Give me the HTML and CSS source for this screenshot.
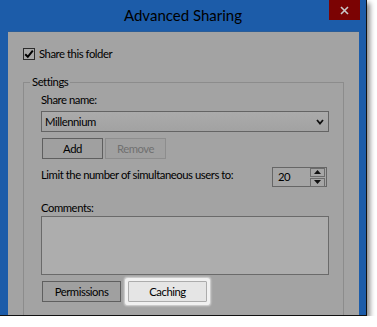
FILE: index.html
```html
<!DOCTYPE html>
<html lang="en">
<head>
    <meta charset="UTF-8">
    <title>Advanced Sharing</title>
    <link rel="stylesheet" href="styles.css">
</head>
<body>
    <div class="window">
        <header class="titlebar">
            <span class="title">Advanced Sharing</span>
            <span class="close">
                <svg width="9" height="9" viewBox="0 0 9 9"><path d="M1 1 L8 8 M8 1 L1 8" stroke="#c9c9c9" stroke-width="1.6"/></svg>
            </span>
        </header>

        <div class="client">
            <label class="share-check">
                <span class="checkbox">
                    <svg width="10" height="10" viewBox="0 0 10 10"><path d="M1.2 5.2 L3.8 7.8 L8.8 1.6" fill="none" stroke="#000" stroke-width="2"/></svg>
                </span>
                Share this folder
            </label>

            <fieldset class="group">
                <legend>Settings</legend>

                <div class="field-label">Share name:</div>
                <div class="combo">
                    <span>Millennium</span>
                    <svg width="8" height="6" viewBox="0 0 8 6"><path d="M1 1 L4 4.5 L7 1" fill="none" stroke="#111" stroke-width="1.8"/></svg>
                </div>

                <div class="btn-row">
                    <button class="btn btn-default">Add</button>
                    <button class="btn btn-disabled">Remove</button>
                </div>

                <div class="limit-row">
                    <span>Limit the number of simultaneous users to:</span>
                    <div class="spin">
                        <span class="spin-value">20</span>
                        <div class="spin-btns">
                            <span class="spin-btn"><svg width="7" height="4" viewBox="0 0 7 4"><path d="M0 4 L3.5 0 L7 4 Z" fill="#111"/></svg></span>
                            <span class="spin-btn"><svg width="7" height="4" viewBox="0 0 7 4"><path d="M0 0 L3.5 4 L7 0 Z" fill="#111"/></svg></span>
                        </div>
                    </div>
                </div>

                <div class="field-label comments-label">Comments:</div>
                <div class="textarea"></div>

                <div class="btn-row bottom-row">
                    <button class="btn btn-default btn-wide">Permissions</button>
                    <button class="btn btn-wide btn-focus">Caching</button>
                </div>
            </fieldset>
        </div>
    </div>
</body>
</html>
```

FILE: styles.css
```css
body, html {
    margin: 0;
    padding: 0;
    background: #fff;
    font-family: Lato, "Open Sans", sans-serif;
    font-size: 11.3px;
    letter-spacing: -0.45px;
    color: #000;
}

.window {
    width: 366px;
    height: 315px;
    background: #1c5ca9;
    border-right: 1px solid #111;
    border-bottom: 1px solid #111;
    box-shadow: 3px 3px 5px rgba(0, 0, 0, 0.45);
    display: flex;
    flex-direction: column;
    overflow: hidden;
}

/* Title bar */
.titlebar {
    height: 31px;
    flex: none;
    display: grid;
    grid-template-columns: 1fr auto 1fr;
    align-items: start;
}

.title {
    grid-column: 2;
    font-size: 15px;
    line-height: 16px;
    letter-spacing: 0;
    margin-top: 7px;
    color: #000;
}

.close {
    grid-column: 3;
    justify-self: end;
    margin-right: 6px;
    width: 31px;
    height: 20px;
    background: #7b0303;
    display: flex;
    align-items: center;
    justify-content: center;
}

.close svg {
    display: block;
}

/* Client area */
.client {
    flex: 1;
    margin: 0 7px 0 8px;
    background: #a3a3a3;
    border-top: 1px solid #2b5d97;
    padding: 15px 0 0 15px;
    overflow: hidden;
}

.share-check {
    display: flex;
    align-items: center;
    gap: 4px;
    line-height: 14px;
}

.checkbox {
    width: 10px;
    height: 10px;
    border: 1px solid #2c2c2c;
    background: #a8a8a8;
    display: flex;
    align-items: center;
    justify-content: center;
}

.checkbox svg {
    display: block;
}

/* Settings group */
.group {
    margin: 13px 0 0 0;
    width: 288px;
    height: 300px;
    border: 1px solid #8c8c8c;
    padding: 2px 14px 0 17px;
}

.group legend {
    margin-left: -11px;
    padding: 0 2px;
    line-height: 16px;
}

.field-label {
    line-height: 16px;
    margin-bottom: 3px;
}

.combo {
    height: 19px;
    border: 1px solid #646464;
    background: linear-gradient(to bottom, #ababab, #a2a2a2);
    display: flex;
    align-items: center;
    justify-content: space-between;
    padding: 0 4px 0 3px;
}

.btn-row {
    display: flex;
    gap: 2px;
    margin: 6px 0 0 1px;
}

.btn {
    font: inherit;
    letter-spacing: inherit;
    width: 61px;
    height: 21px;
    padding: 0;
    background: #a0a0a0;
    border: 1px solid #5f5f5f;
    color: #000;
}

.btn-disabled {
    border-color: #8d8d8d;
    color: #707070;
}

.limit-row {
    display: flex;
    justify-content: space-between;
    align-items: center;
    margin-top: 8px;
    margin-right: 2px;
    line-height: 16px;
}

.limit-row > span {
    white-space: nowrap;
    margin-top: -4px;
}

.spin {
    width: 53px;
    height: 18px;
    border: 1px solid #666;
    background: #a5a5a5;
    display: flex;
    align-items: center;
    justify-content: space-between;
}

.spin-value {
    padding-left: 5px;
}

.spin-btns {
    display: flex;
    flex-direction: column;
    gap: 1px;
    padding: 0 1px 0 0;
}

.spin-btn {
    width: 13px;
    height: 7px;
    border: 1px solid #6c6c6c;
    background: #a6a6a6;
    display: flex;
    align-items: center;
    justify-content: center;
}

.comments-label {
    margin-top: 13px;
    margin-bottom: 0;
}

.textarea {
    height: 57px;
    border: 1px solid #6a6a6a;
    background: #adadad;
}

.bottom-row {
    gap: 7px;
}

.btn-wide {
    width: 79px;
}

.btn-focus {
    background: #e5e5e5;
    border-color: #acacac;
    box-shadow: 0 0 0 3px #f1f1f1, 0 0 2px 4px rgba(241, 241, 241, 0.7);
    border-radius: 1px;
}
```
